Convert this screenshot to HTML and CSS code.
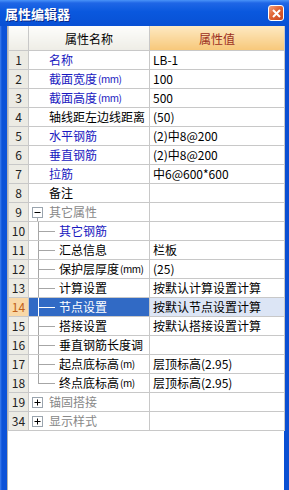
FILE: index.html
```html
<!DOCTYPE html>
<html lang="zh-CN">
<head>
  <meta charset="UTF-8">
  <title>属性编辑器</title>
  <link rel="stylesheet" href="styles.css">
</head>
<body>

<div class="window">
  <div class="titlebar">
    <span class="title">属性编辑器</span>
    <span class="close">
      <svg width="9" height="9" viewBox="0 0 9 9"><path d="M1 1L8 8M8 1L1 8" stroke="#fff" stroke-width="2"/></svg>
    </span>
  </div>

  <div class="client">
    <table class="grid">
      <colgroup>
        <col class="c-num">
        <col class="c-name">
        <col class="c-value">
      </colgroup>
      <thead>
        <tr>
          <th class="num-h"></th>
          <th class="name-h">属性名称</th>
          <th class="value-h">属性值</th>
        </tr>
      </thead>
      <tbody>
        <tr><td class="num">1</td><td class="name"><div class="cell top blue">名称</div></td><td class="value">LB-1</td></tr>
        <tr><td class="num">2</td><td class="name"><div class="cell top blue">截面宽度<span class="unit">(mm)</span></div></td><td class="value">100</td></tr>
        <tr><td class="num">3</td><td class="name"><div class="cell top blue">截面高度<span class="unit">(mm)</span></div></td><td class="value">500</td></tr>
        <tr><td class="num">4</td><td class="name"><div class="cell top">轴线距左边线距离</div></td><td class="value">(50)</td></tr>
        <tr><td class="num">5</td><td class="name"><div class="cell top blue">水平钢筋</div></td><td class="value">(2)中8@200</td></tr>
        <tr><td class="num">6</td><td class="name"><div class="cell top blue">垂直钢筋</div></td><td class="value">(2)中8@200</td></tr>
        <tr><td class="num">7</td><td class="name"><div class="cell top blue">拉筋</div></td><td class="value">中6@600*600</td></tr>
        <tr><td class="num">8</td><td class="name"><div class="cell top">备注</div></td><td class="value"></td></tr>
        <tr>
          <td class="num">9</td>
          <td class="name open"><div class="cell group">
            <svg class="box" width="11" height="11" viewBox="0 0 11 11"><rect x="0.5" y="0.5" width="10" height="10" fill="#fff" stroke="#9aa4ae"/><path d="M2.5 5.5h6" stroke="#000"/></svg>
            其它属性</div></td>
          <td class="value"></td>
        </tr>
        <tr><td class="num">10</td><td class="name"><div class="cell child blue"><span class="tree"></span>其它钢筋</div></td><td class="value"></td></tr>
        <tr><td class="num">11</td><td class="name"><div class="cell child"><span class="tree"></span>汇总信息</div></td><td class="value">栏板</td></tr>
        <tr><td class="num">12</td><td class="name"><div class="cell child"><span class="tree"></span>保护层厚度<span class="unit">(mm)</span></div></td><td class="value">(25)</td></tr>
        <tr><td class="num">13</td><td class="name"><div class="cell child"><span class="tree"></span>计算设置</div></td><td class="value">按默认计算设置计算</td></tr>
        <tr class="selected"><td class="num">14</td><td class="name"><div class="cell child"><span class="tree"></span>节点设置</div></td><td class="value">按默认节点设置计算</td></tr>
        <tr><td class="num">15</td><td class="name"><div class="cell child"><span class="tree"></span>搭接设置</div></td><td class="value">按默认搭接设置计算</td></tr>
        <tr><td class="num">16</td><td class="name"><div class="cell child"><span class="tree"></span>垂直钢筋长度调</div></td><td class="value"></td></tr>
        <tr><td class="num">17</td><td class="name"><div class="cell child"><span class="tree"></span>起点底标高<span class="unit">(m)</span></div></td><td class="value">层顶标高(2.95)</td></tr>
        <tr><td class="num">18</td><td class="name"><div class="cell child"><span class="tree last"></span>终点底标高<span class="unit">(m)</span></div></td><td class="value">层顶标高(2.95)</td></tr>
        <tr>
          <td class="num">19</td>
          <td class="name"><div class="cell group">
            <svg class="box" width="11" height="11" viewBox="0 0 11 11"><rect x="0.5" y="0.5" width="10" height="10" fill="#fff" stroke="#9aa4ae"/><path d="M2.5 5.5h6M5.5 2.5v6" stroke="#000"/></svg>
            锚固搭接</div></td>
          <td class="value"></td>
        </tr>
        <tr>
          <td class="num">34</td>
          <td class="name"><div class="cell group">
            <svg class="box" width="11" height="11" viewBox="0 0 11 11"><rect x="0.5" y="0.5" width="10" height="10" fill="#fff" stroke="#9aa4ae"/><path d="M2.5 5.5h6M5.5 2.5v6" stroke="#000"/></svg>
            显示样式</div></td>
          <td class="value"></td>
        </tr>
      </tbody>
    </table>
  </div>
</div>

</body>
</html>
```

FILE: styles.css
```css
body {
  margin: 0;
  font-family: "Noto Sans CJK SC", sans-serif;
  font-size: 12px;
  color: #000;
  background: #fff;
}
.window {
  width: 289px;
  height: 490px;
  display: flex;
  flex-direction: column;
  background: linear-gradient(90deg, #3f7ff0 0, #0c52d8 2px, #0a4fd2 100%);
}
.titlebar {
  height: 26px;
  flex: none;
  display: flex;
  align-items: center;
  justify-content: space-between;
  padding: 0 5px 0 5px;
  background: linear-gradient(#4a93f8 0, #1f66e6 3px, #0a58de 45%, #0850d4 100%);
}
.title {
  color: #fff;
  font-weight: bold;
  font-size: 13px;
  text-shadow: 1px 1px 0 #0a2a8a;
}
.close {
  width: 14px;
  height: 14px;
  border: 1px solid #fff;
  border-radius: 3px;
  display: flex;
  align-items: center;
  justify-content: center;
  background: linear-gradient(135deg, #f0a080 0, #e06434 45%, #c8451e 100%);
}
.client {
  flex: 1;
  margin: 0 5px 0 7px;
  background: #fff;
  border-left: 1px solid #b4b4b4;
}
.grid {
  width: 276px;
  border-collapse: collapse;
  table-layout: fixed;
}
.c-num { width: 20px; }
.c-name { width: 121px; }
.c-value { width: 135px; }

th {
  height: 24px;
  padding: 0;
  font-weight: normal;
  font-size: 12px;
  border: 1px solid #c8c8c8;
  border-top: none;
}
.num-h, .name-h {
  background: linear-gradient(#fdfdfb, #eeede6);
}
.value-h {
  color: #9c2f22;
  background: linear-gradient(#fde9c2, #f7c87a);
}
tbody tr {
  height: 19px;
}
td {
  padding: 0;
  height: 18px;
  line-height: 18px;
  border: 1px solid #c8c8c8;
  white-space: nowrap;
  overflow: hidden;
}
.num {
  text-align: center;
  color: #222;
  background: #ecebe4;
}
.value {
  padding-left: 3px;
}
.cell {
  height: 18px;
  display: flex;
  align-items: center;
}
.unit {
  font-size: 10px;
  letter-spacing: -0.5px;
  margin-left: 1px;
}
.top {
  padding-left: 20px;
}
.group {
  padding-left: 3px;
  gap: 6px;
  color: #888;
}
.child {
  padding-left: 9px;
}
.blue {
  color: #1818c0;
}
.box {
  flex: none;
}
.open {
  background: linear-gradient(#a6a6a6, #a6a6a6) 8px 100% / 1px 45% no-repeat;
}
.tree {
  flex: none;
  width: 17px;
  height: 19px;
  margin-right: 4px;
  background:
    linear-gradient(#a6a6a6, #a6a6a6) 0 0 / 1px 100% no-repeat,
    linear-gradient(#a6a6a6, #a6a6a6) 0 50% / 100% 1px no-repeat;
}
.tree.last {
  background:
    linear-gradient(#a6a6a6, #a6a6a6) 0 0 / 1px 50% no-repeat,
    linear-gradient(#a6a6a6, #a6a6a6) 0 50% / 100% 1px no-repeat;
}
.selected .num {
  color: #c0601a;
  background: #f9d8a6;
}
.selected .name {
  color: #fff;
  background: #316ac5;
}
.selected .tree {
  background:
    linear-gradient(#fff, #fff) 0 0 / 1px 100% no-repeat,
    linear-gradient(#fff, #fff) 0 50% / 100% 1px no-repeat;
}
.selected .value {
  background: #dce5f5;
}
```
